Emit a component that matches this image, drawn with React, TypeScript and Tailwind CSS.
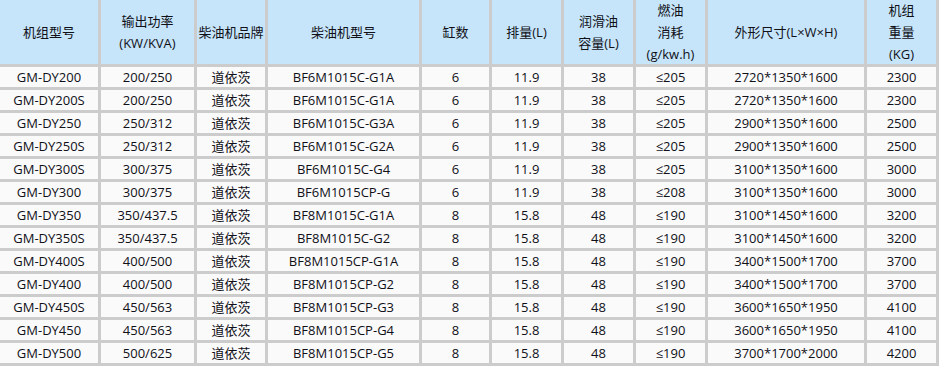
const headers: string[][] = [
  ['机组型号'],
  ['输出功率', '(KW/KVA)'],
  ['柴油机品牌'],
  ['柴油机型号'],
  ['缸数'],
  ['排量(L)'],
  ['润滑油', '容量(L)'],
  ['燃油', '消耗', '(g/kw.h)'],
  ['外形尺寸(L×W×H)'],
  ['机组', '重量', '(KG)'],
];

const rows: string[][] = [
  ['GM-DY200', '200/250', '道依茨', 'BF6M1015C-G1A', '6', '11.9', '38', '≤205', '2720*1350*1600', '2300'],
  ['GM-DY200S', '200/250', '道依茨', 'BF6M1015C-G1A', '6', '11.9', '38', '≤205', '2720*1350*1600', '2300'],
  ['GM-DY250', '250/312', '道依茨', 'BF6M1015C-G3A', '6', '11.9', '38', '≤205', '2900*1350*1600', '2500'],
  ['GM-DY250S', '250/312', '道依茨', 'BF6M1015C-G2A', '6', '11.9', '38', '≤205', '2900*1350*1600', '2500'],
  ['GM-DY300S', '300/375', '道依茨', 'BF6M1015C-G4', '6', '11.9', '38', '≤205', '3100*1350*1600', '3000'],
  ['GM-DY300', '300/375', '道依茨', 'BF6M1015CP-G', '6', '11.9', '38', '≤208', '3100*1350*1600', '3000'],
  ['GM-DY350', '350/437.5', '道依茨', 'BF8M1015C-G1A', '8', '15.8', '48', '≤190', '3100*1450*1600', '3200'],
  ['GM-DY350S', '350/437.5', '道依茨', 'BF8M1015C-G2', '8', '15.8', '48', '≤190', '3100*1450*1600', '3200'],
  ['GM-DY400S', '400/500', '道依茨', 'BF8M1015CP-G1A', '8', '15.8', '48', '≤190', '3400*1500*1700', '3700'],
  ['GM-DY400', '400/500', '道依茨', 'BF8M1015CP-G2', '8', '15.8', '48', '≤190', '3400*1500*1700', '3700'],
  ['GM-DY450S', '450/563', '道依茨', 'BF8M1015CP-G3', '8', '15.8', '48', '≤190', '3600*1650*1950', '4100'],
  ['GM-DY450', '450/563', '道依茨', 'BF8M1015CP-G4', '8', '15.8', '48', '≤190', '3600*1650*1950', '4100'],
  ['GM-DY500', '500/625', '道依茨', 'BF8M1015CP-G5', '8', '15.8', '48', '≤190', '3700*1700*2000', '4200'],
];

export default function App() {
  return (
    <div
      className="w-[940px] h-[367px] overflow-hidden bg-white text-[13px] text-[#101018]"
      style={{ fontFamily: '"Open Sans", "Noto Sans", "Noto Sans CJK SC", sans-serif' }}
    >
      <div className="grid w-[939px] grid-cols-[98px_93px_68px_151px_67px_69px_69px_69px_156px_69px] grid-rows-[64px_repeat(13,20px)] gap-[3px] bg-[#cccccc] pr-[3px] pb-[3px]">
        {headers.map((lines, i) => (
          <div
            key={`h${i}`}
            className="flex flex-col items-center justify-center bg-[#c6e5fa] leading-[22px]"
          >
            {lines.map((line) => (
              <span key={line} className="whitespace-nowrap">
                {line}
              </span>
            ))}
          </div>
        ))}
        {rows.map((row, r) =>
          row.map((cell, c) => (
            <div
              key={`${r}-${c}`}
              className="flex items-center justify-center whitespace-nowrap bg-[#fafafa] leading-[20px]"
            >
              {cell}
            </div>
          )),
        )}
      </div>
    </div>
  );
}
